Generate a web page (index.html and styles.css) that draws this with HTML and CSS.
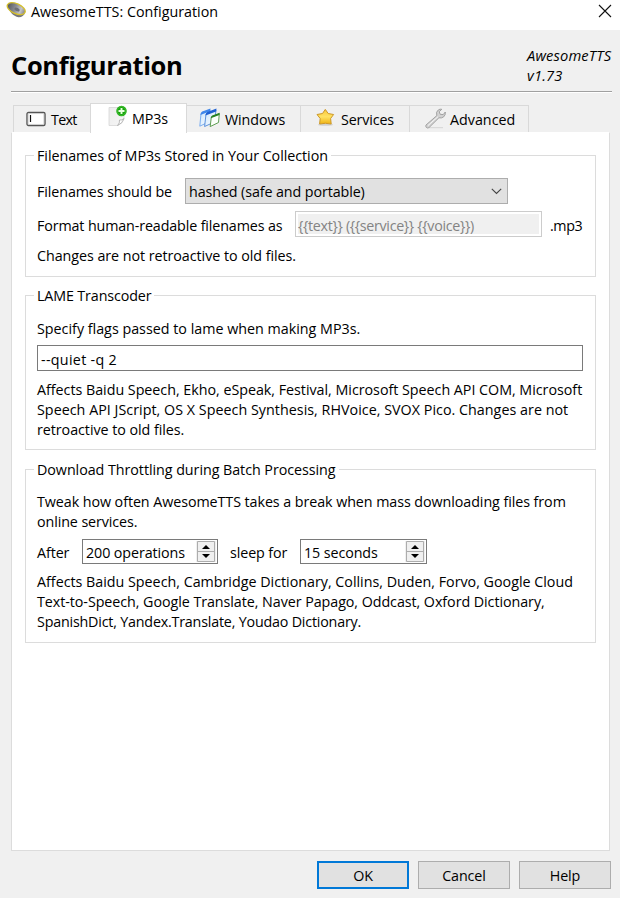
FILE: index.html
```html
<!DOCTYPE html>
<html lang="en">
<head>
<meta charset="utf-8">
<title>AwesomeTTS: Configuration</title>
<link rel="stylesheet" href="styles.css">
</head>
<body>
<div class="window">
  <header class="titlebar">
    <svg class="app-icon" width="22" height="20" viewBox="0 0 22 20">
      <defs><linearGradient id="cone" x1="0" y1="0" x2="1" y2="0"><stop offset="0" stop-color="#55565c"/><stop offset=".45" stop-color="#8c8d94"/><stop offset=".75" stop-color="#c4c4c8"/><stop offset="1" stop-color="#808086"/></linearGradient></defs>
      <path d="M1.500 6 C3 11 7 16.500 12.500 17.200 C15.500 17.400 18 15.500 19 13Z" fill="#77777c"/>
      <ellipse cx="10.200" cy="8.600" rx="9.600" ry="5" transform="rotate(24 10.200 8.600)" fill="url(#cone)" stroke="#d6c02a" stroke-width="1.300"/>
      <ellipse cx="11" cy="9.500" rx="2.800" ry="1.700" transform="rotate(24 11 9.500)" fill="#6e6f76"/>
    </svg>
    <span class="window-title">AwesomeTTS: Configuration</span>
    <svg class="close" width="14" height="14" viewBox="0 0 14 14"><path d="M1 1 L13 13 M13 1 L1 13" stroke="#111" stroke-width="1.100" fill="none"/></svg>
  </header>

  <section class="heading">
    <h1>Configuration</h1>
    <div class="version">AwesomeTTS<br>v1.73</div>
  </section>

  <nav class="tabs">
    <div class="tab tab-text">
      <svg width="20" height="16" viewBox="0 0 20 16"><rect x="1" y="1.500" width="18" height="13" rx="1.500" fill="#fff" stroke="#555" stroke-width="1.400"/><rect x="2.200" y="2.700" width="15.600" height="10.600" fill="none" stroke="#ccc" stroke-width=".7"/><path d="M4.500 4 V11" stroke="#111" stroke-width="1.200"/></svg>
      <span>Text</span>
    </div>
    <div class="tab tab-mp3 active">
      <svg width="20" height="22" viewBox="0 0 20 22">
        <defs><linearGradient id="sheet" x1="0" y1="0" x2="1" y2="1"><stop offset="0" stop-color="#ececec"/><stop offset="1" stop-color="#f6f6f6"/></linearGradient></defs>
        <path d="M2 2.500 H17 V14 Q16 18 11 20.500 H2Z" fill="url(#sheet)" stroke="#d6d6d6" stroke-width=".8"/>
        <path d="M17 13.500 Q15 15.500 12.500 15 Q13 18 10.500 20.500 Q15.500 18.500 17 13.500Z" fill="#fff" stroke="#aaa" stroke-width=".8"/>
        <circle cx="14.500" cy="6" r="5.200" fill="#18a50e"/><circle cx="14.500" cy="6" r="4.400" fill="none" stroke="#4fc53d" stroke-width=".8"/>
        <path d="M14.500 3 V9 M11.500 6 H17.500" stroke="#e8ffe0" stroke-width="1.900"/>
      </svg>
      <span>MP3s</span>
    </div>
    <div class="tab tab-windows">
      <svg width="21" height="20" viewBox="0 0 21 20">
        <defs><linearGradient id="pane" x1="0" y1="0" x2="1" y2="1"><stop offset="0" stop-color="#c9e4fb"/><stop offset="1" stop-color="#fff"/></linearGradient></defs>
        <path d="M2 5.500 L11 2 L9.500 14 L.8 18.200Z" fill="url(#pane)" stroke="#6ea6ee" stroke-width=".9"/><path d="M1.400 7 Q1.700 4.300 3.200 3.600 L11.500 .6 L11.200 3.200Z" fill="#3f87ea"/>
        <path d="M7 6 L17 2 L15.500 14 L5.600 18.500Z" fill="url(#pane)" stroke="#4c86d8" stroke-width=".9"/><path d="M6.500 7.400 Q6.800 4.700 8.300 4 L17.500 .6 L17.100 3.400Z" fill="#1c5fd2"/>
        <path d="M12.300 9 L20.300 5.800 L19.500 14.500 L11.200 18.600Z" fill="#fbfffa" stroke="#5d9c52" stroke-width="1"/><path d="M11.800 10.200 Q12 8 13.200 7.500 L20.700 4.800 L20.400 7Z" fill="#278123"/>
      </svg>
      <span>Windows</span>
    </div>
    <div class="tab tab-services">
      <svg width="19" height="18" viewBox="0 0 19 18">
        <defs><linearGradient id="gold" x1="0" y1="0" x2="0" y2="1"><stop offset="0" stop-color="#f9c536"/><stop offset=".5" stop-color="#ffe263"/><stop offset="1" stop-color="#eeb112"/></linearGradient></defs>
        <ellipse cx="9.500" cy="15.800" rx="7.500" ry="1" fill="#d0d0d0"/>
        <path d="M9.300 .4 L12.200 4.500 L17.600 5.500 L14.600 9.500 L15.200 15 L9.300 14.300 L3.600 15 L4.200 9.500 L1 5.500 L6.500 4.500Z" fill="url(#gold)" stroke="#cc9829" stroke-width="1" stroke-linejoin="round"/>
      </svg>
      <span>Services</span>
    </div>
    <div class="tab tab-advanced">
      <svg width="21" height="21" viewBox="0 0 21 21">
        <path d="M4 19.700 H18" stroke="#d4d4d4" stroke-width="1"/>
        <path d="M1 17 L11.800 7.600 Q10.500 3.800 13.500 1.800 Q15 .8 16.800 1.300 L14.200 3.700 L15.200 6.300 L18.200 6.600 L20.300 4 Q20.800 7 18.600 8.900 Q16.500 10.500 13.900 9.800 L4 19.600 Q2.600 20.600 1.300 19.400 Q.4 18.400 1 17Z" fill="#d2d2d2" stroke="#9b9b9b" stroke-width=".9" stroke-linejoin="round"/>
        <path d="M3 17.500 L13 8.700" stroke="#f6f6f6" stroke-width="1"/>
      </svg>
      <span>Advanced</span>
    </div>
  </nav>

  <main class="panel">
    <section class="group filenames">
      <h2>Filenames of MP3s Stored in Your Collection</h2>
      <div class="row select-row">
        <label>Filenames should be</label>
        <div class="select"><span>hashed (safe and portable)</span><svg width="11" height="7" viewBox="0 0 11 7"><path d="M.8 .8 L5.500 5.500 L10.200 .8" fill="none" stroke="#444" stroke-width="1.100"/></svg></div>
      </div>
      <div class="row format-row">
        <label>Format human-readable filenames as</label>
        <div class="field disabled"><span>{{text}} ({{service}} {{voice}})</span></div>
        <span class="suffix">.mp3</span>
      </div>
      <p>Changes are not retroactive to old files.</p>
    </section>

    <section class="group lame">
      <h2>LAME Transcoder</h2>
      <p>Specify flags passed to lame when making MP3s.</p>
      <div class="field flags"><span>--quiet -q 2</span></div>
      <p><span class="l1">Affects Baidu Speech, Ekho, eSpeak, Festival, Microsoft Speech API COM, Microsoft</span><br><span class="l2">Speech API JScript, OS X Speech Synthesis, RHVoice, SVOX Pico. Changes are not</span><br><span class="l3">retroactive to old files.</span></p>
    </section>

    <section class="group throttling">
      <h2>Download Throttling during Batch Processing</h2>
      <p><span class="l4">Tweak how often AwesomeTTS takes a break when mass downloading files from</span><br>online services.</p>
      <div class="row spin-row">
        <label class="after">After</label>
        <div class="spin operations"><span>200 operations</span>
          <svg width="20" height="21" viewBox="0 0 20 21"><rect width="20" height="21" fill="#f0f0f0"/><path d="M1.500 .5 H18.500 V20.500 H1.500Z M1.500 10.500 H18.500" fill="#f0f0f0" stroke="#adadad"/><path d="M6 8 L10 4 L14 8Z M6 13 L10 17 L14 13Z" fill="#000"/></svg></div>
        <label class="sleep">sleep for</label>
        <div class="spin seconds"><span>15 seconds</span>
          <svg width="20" height="21" viewBox="0 0 20 21"><rect width="20" height="21" fill="#f0f0f0"/><path d="M1.500 .5 H18.500 V20.500 H1.500Z M1.500 10.500 H18.500" fill="#f0f0f0" stroke="#adadad"/><path d="M6 8 L10 4 L14 8Z M6 13 L10 17 L14 13Z" fill="#000"/></svg></div>
      </div>
      <p><span class="l5">Affects Baidu Speech, Cambridge Dictionary, Collins, Duden, Forvo, Google Cloud</span><br><span class="l6">Text-to-Speech, Google Translate, Naver Papago, Oddcast, Oxford Dictionary,</span><br><span class="l7">SpanishDict, Yandex.Translate, Youdao Dictionary.</span></p>
    </section>
  </main>

  <footer class="actions">
    <div class="button primary">OK</div>
    <div class="button">Cancel</div>
    <div class="button">Help</div>
  </footer>
</div>
</body>
</html>
```
FILE: styles.css
```css
* { box-sizing: border-box; }
body { margin: 0; background: #f0f0f0; color: #000; font: 14.3px/20px "Open Sans", "Noto Sans", sans-serif; letter-spacing: -0.1px; white-space: nowrap; }
h1, h2, p { margin: 0; font-weight: 400; }
svg { display: block; flex: none; }
.window { width: 620px; height: 898px; display: flex; flex-direction: column; background: #f0f0f0; overflow: hidden; }
.titlebar { height: 30px; flex: none; display: flex; background: #fff; padding-left: 6px; }
.window-title { margin: 2px 0 0 3px; letter-spacing: 0; }
.close { margin: 4px 8px 0 auto; }
.heading { height: 63px; flex: none; margin: 0 8px 0 11px; display: flex; justify-content: space-between; border-bottom: 1px solid #fff; box-shadow: inset 0 -1px #a0a0a0; }
h1 { font-size: 25.500px; font-weight: 700; line-height: 36px; margin-top: 17px; letter-spacing: -0.35px; }
.version { font-size: 14.700px; font-style: italic; margin-top: 15px; width: 85px; letter-spacing: 0.15px; }
.tabs { height: 39px; flex: none; margin-left: 13px; display: flex; align-items: flex-end; }
.tab { height: 27px; display: flex; align-items: center; border-top: 1px solid #d9d9d9; border-right: 1px solid #d9d9d9; }
.tab span { padding-top: 2px; }
.tab-text { width: 77px; padding-left: 12px; gap: 5px; border-left: 1px solid #d9d9d9; border-right: 0; letter-spacing: -0.7px; }
.tab-mp3 { width: 97px; padding-left: 16px; gap: 5px; }
.tab-windows { width: 114px; padding-left: 12px; gap: 5px; }
.tab-services { width: 109px; padding-left: 15px; gap: 6px; letter-spacing: -0.15px; }
.tab-advanced { width: 119px; padding-left: 15px; gap: 4px; letter-spacing: 0; }
.tab-windows svg, .tab-services svg, .tab-advanced svg { margin-top: -2px; }
.tab.active { height: 30px; margin-bottom: -1px; background: #fff; border-left: 1px solid #d9d9d9; position: relative; }
.active span { padding-top: 0; }
.active svg { margin-top: -5px; }
.panel { height: 719px; flex: none; width: 599px; margin-left: 11px; background: #fff; border: 1px solid #dcdcdc; border-top-color: #fff; padding: 22px 13px 0; }
.group { border: 1px solid #dcdcdc; padding-left: 11px; }
.group h2 { font-size: inherit; line-height: 20px; height: 21px; margin: -11px 0 0 -3px; padding: 1px 3px 0; background: #fff; width: max-content; letter-spacing: -0.05px; }
.row { display: flex; align-items: center; }
.filenames { height: 122px; }
.lame { height: 155px; margin-top: 18px; }
.lame h2 { letter-spacing: -0.13px; }
.throttling { height: 174px; margin-top: 19px; }
.select { width: 323px; height: 26px; margin-left: auto; border: 1px solid #adadad; background: #e1e1e1; display: flex; align-items: center; justify-content: space-between; padding: 0 5px 0 3px; }
.select span, .row label, .spin span { padding-top: 2px; }
.select-row { width: 471px; margin-top: 12px; }
.format-row { margin-top: 7px; }
.format-row label { width: 258px; padding-top: 3px; letter-spacing: -0.13px; }
.field { height: 26px; border: 1px solid #7a7a7a; display: flex; align-items: center; }
.disabled { width: 247px; border-color: #ccc; background: #f0f0f0; box-shadow: inset 0 0 0 2px #fff; color: #838383; padding: 3px 0 0 2px; letter-spacing: -0.33px; }
.suffix { margin-left: 8px; padding-top: 3px; letter-spacing: -0.4px; }
.filenames p { margin-top: 9px; letter-spacing: -0.05px; }
.lame h2 + p { margin-top: 13px; letter-spacing: 0; }
.flags { width: 546px; margin: 6px 0 9px; padding: 3px 0 0 3px; letter-spacing: 0.3px; }
.throttling h2 + p { margin-top: 12px; }
.spin-row { margin: 7px 0 8px; }
.spin { height: 25px; border: 1px solid #7a7a7a; display: flex; align-items: center; justify-content: space-between; padding: 0 1px 0 3px; }
.after { width: 45px; }
.operations { width: 136px; }
.sleep { width: 70px; margin-left: 12px; }
.seconds { width: 127px; }
.l1 { letter-spacing: -0.025px; }
.l2 { letter-spacing: 0.025px; }
.l3 { letter-spacing: -0.05px; }
.l4 { letter-spacing: -0.07px; }
.l5 { letter-spacing: -0.01px; }
.l6 { letter-spacing: -0.06px; }
.l7 { letter-spacing: -0.2px; }
.actions { display: flex; gap: 9px; padding: 10px 0 0 317px; }
.button { width: 92px; height: 28px; border: 1px solid #adadad; background: #e1e1e1; text-align: center; line-height: 27px; }
.primary { border: 2px solid #0078d7; line-height: 25px; }
```
